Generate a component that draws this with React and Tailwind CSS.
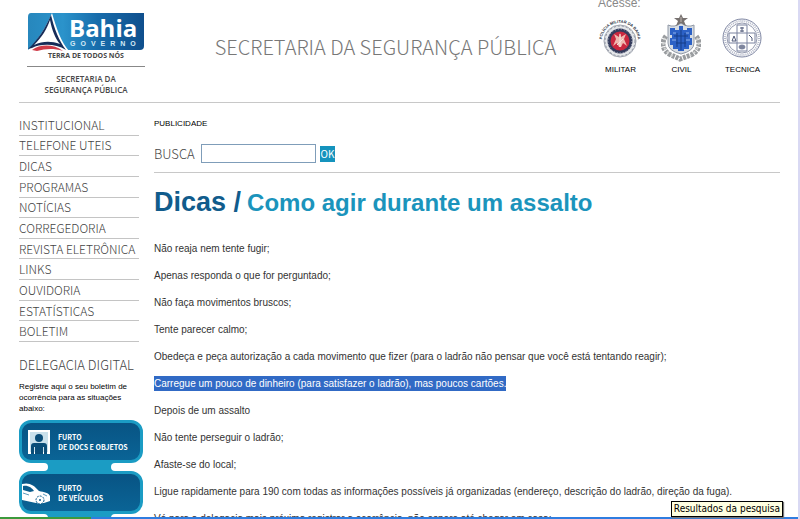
import React from 'react';

const menuItems = [
  'INSTITUCIONAL',
  'TELEFONE UTEIS',
  'DICAS',
  'PROGRAMAS',
  'NOTÍCIAS',
  'CORREGEDORIA',
  'REVISTA ELETRÔNICA',
  'LINKS',
  'OUVIDORIA',
  'ESTATÍSTICAS',
  'BOLETIM',
];

const tips = [
  { text: 'Não reaja nem tente fugir;' },
  { text: 'Apenas responda o que for perguntado;' },
  { text: 'Não faça movimentos bruscos;' },
  { text: 'Tente parecer calmo;' },
  { text: 'Obedeça e peça autorização a cada movimento que fizer (para o ladrão não pensar que você está tentando reagir);' },
  { text: 'Carregue um pouco de dinheiro (para satisfazer o ladrão), mas poucos cartões.', selected: true },
  { text: 'Depois de um assalto' },
  { text: 'Não tente perseguir o ladrão;' },
  { text: 'Afaste-se do local;' },
  { text: 'Ligue rapidamente para 190 com todas as informações possíveis já organizadas (endereço, descrição do ladrão, direção da fuga).' },
  { text: 'Vá para a delegacia mais próxima registrar a ocorrência, não espere até chegar em casa;' },
];

function BahiaLogo() {
  return (
    <svg width="118" height="38" viewBox="0 0 118 38" role="img" aria-label="Bahia Governo">
      <defs>
        <linearGradient id="logoBg" x1="0" y1="0" x2="1" y2="0">
          <stop offset="0" stopColor="#2787bd" />
          <stop offset="0.3" stopColor="#2b93cb" />
          <stop offset="0.6" stopColor="#176cab" />
          <stop offset="1" stopColor="#0f4f8d" />
        </linearGradient>
      </defs>
      <path d="M4 0H117V33Q117 37 113 37H1V4Q1 0 4 0Z" fill="url(#logoBg)" />
      <path d="M25 0C20 12 11 28 0 38H42C34 29 29 14 25 0Z" fill="#fff" />
      <path d="M24 2C19 14 11 27 1 36L5 35C13 31 28 30 39 37C32 28 27 15 24 2ZM23 7C25 17 28 25 33 31C24 28 16 28 7 32C15 24 20 16 23 7Z" fill="#172c58" fillRule="evenodd" />
      <path d="M5 37C13 31 27 31 36 38C26 35 18 36 10 38Z" fill="#cf3b48" />
      <text x="42" y="24" fill="#fff" fontSize="24" fontWeight="700" fontFamily="Open Sans, sans-serif">Bahia</text>
      <text x="43" y="33" fill="#d5e9f5" fontSize="7" fontWeight="700" letterSpacing="5" fontFamily="Liberation Sans, sans-serif">GOVERNO</text>
    </svg>
  );
}

function MilitarBadge() {
  return (
    <svg width="46" height="44" viewBox="0 0 46 44" className="overflow-visible" aria-hidden="true">
      <defs>
        <path id="militarArc" d="M7 33A18 18 0 1 1 39 33" />
      </defs>
      <text fill="#2c3344" fontSize="4" fontWeight="700" fontFamily="Liberation Sans, sans-serif">
        <textPath href="#militarArc" startOffset="50%" textAnchor="middle">POLÍCIA MILITAR DA BAHIA</textPath>
      </text>
      <circle cx="23" cy="25" r="16" fill="#e4e6e9" stroke="#a3a8b2" />
      <circle cx="23" cy="25" r="15" fill="none" stroke="#8b919e" strokeDasharray="2 2" />
      <circle cx="23" cy="25" r="11" fill="#c9283f" stroke="#343c5c" strokeWidth="3" />
      <circle cx="23" cy="25" r="12" fill="none" stroke="#b9bccb" strokeDasharray="1 2" />
      <path d="M23 17l1 4 5-3-2 5 3 7-4-3-2 4h-2l-2-4-4 3 3-7-2-5 5 3Z" fill="#efb9b0" />
      <path d="M23 18v13M20 29l6-6" stroke="#f7e4df" strokeWidth="1" />
    </svg>
  );
}

function CivilBadge() {
  return (
    <svg width="40" height="48" viewBox="0 0 40 48" aria-hidden="true">
      <path d="M5 22C0 28 1 37 10 41L19 45L30 41C39 37 40 28 35 22" fill="none" stroke="#999c9f" strokeWidth="5" strokeDasharray="3 1" />
      <path d="M4 24C0 31 4 39 14 43M36 24C40 31 36 39 26 43" fill="none" stroke="#d0d2d2" strokeWidth="2" strokeDasharray="2 3" />
      <path d="M7 11Q13 14 20 9Q27 14 33 11V29Q33 37 20 40Q7 37 7 29Z" fill="#d6dce3" stroke="#9199a6" />
      <path d="M9 14h5v2h4v-4h4v4h4v-2h5v7h-2v3h2v7h-3v4h-5v2h-6v-2h-5v-4h-3v-7h2v-3h-2Z" fill="#2c61c6" />
      <path d="M20 16v20M13 22h14M15 29h10M16 19v14M24 19v14" stroke="#173e87" strokeWidth="1" />
      <path d="M12 19h3M25 19h3M11 26h4M25 26h4" stroke="#8fb3eb" />
      <path d="M20 0l2 4h5l-4 3 2 5-5-3-5 3 2-5-4-3h5Z" fill="#77716f" />
      <path d="M20 3v5" stroke="#c0b9b4" />
    </svg>
  );
}

function TecnicaBadge() {
  return (
    <svg width="42" height="42" viewBox="0 0 42 42" aria-hidden="true" fill="none" stroke="#7b83a0">
      <circle cx="21" cy="21" r="19" />
      <circle cx="21" cy="21" r="17" stroke="#b4b9c9" strokeWidth="2" strokeDasharray="1 1" />
      <circle cx="21" cy="21" r="15" stroke="#959bb0" />
      <path d="M16 8h10v8h8v10h-8v8H16v-8H8V16h8Z" fill="#fff" />
      <path d="M16 16h10v10H16Z" />
      <path d="M21 10v5M19 11h4M19 14h4M11 24l2-5 2 5ZM28 18l3 3v3" stroke="#4f5878" />
      <ellipse cx="21" cy="30" rx="3" ry="2" fill="#7d849b" />
    </svg>
  );
}

function PersonIcon() {
  return (
    <svg width="22" height="24" viewBox="0 0 22 24" aria-hidden="true">
      <path d="M0 0h22v24H0Z" fill="#fff" />
      <path d="M2 2h18v20H2Z" fill="#c9e0eb" />
      <circle cx="11" cy="8" r="4" fill="#0a4d78" />
      <path d="M3 24V16Q3 13 6 13H16Q19 13 19 16V24H16V17H15V24H7V17H6V24Z" fill="#0a4d78" />
    </svg>
  );
}

function CarIcon() {
  return (
    <svg width="28" height="24" viewBox="0 0 28 24" aria-hidden="true">
      <path d="M0 3C7 1 12 4 17 10C22 11 27 12 28 15V20L22 22H14L0 19Z" fill="#fff" />
      <path d="M1 5C6 4 10 7 12 10L8 11L1 9Z" fill="#0b5c8c" />
      <path d="M21 13l4 2M1 12l6 2" stroke="#5d9bbd" />
      <circle cx="18" cy="19" r="4" fill="#fff" stroke="#0b5c8c" strokeDasharray="2 1" />
      <circle cx="18" cy="19" r="1" fill="#0b5c8c" />
    </svg>
  );
}

const agencies = [
  { name: 'MILITAR', icon: <MilitarBadge /> },
  { name: 'CIVIL', icon: <CivilBadge /> },
  { name: 'TECNICA', icon: <TecnicaBadge /> },
];

function ReportButton({ icon, title, subtitle }) {
  return (
    <a
      href="#"
      className="flex h-[43px] items-center gap-2 rounded-xl border-3 border-[#1b9cc4] bg-linear-to-b from-[#085484] to-[#0a6496] font-['Noto_Sans_CJK_JP',sans-serif] text-[7px] leading-[10px] font-bold text-white"
    >
      <span className="flex w-7 shrink-0 justify-end">{icon}</span>
      <span className="whitespace-nowrap">
        {title}
        <br />
        {subtitle}
      </span>
    </a>
  );
}

function Connector() {
  return (
    <div className="flex h-2 justify-between bg-[#1b9cc4]">
      <div className="w-[29px] rounded-r-full bg-white" />
      <div className="w-[32px] rounded-l-full bg-white" />
    </div>
  );
}

export default function App() {
  return (
    <div className="relative h-screen overflow-hidden border-r-2 border-[#d9d9f3] bg-white pr-[18px] pl-[19px] font-['Liberation_Sans',sans-serif] text-[#333]">
      {/* Header */}
      <header className="flex h-[103px] justify-between border-b border-[#c8c8c8]">
        <div className="ml-2 flex w-[118px] flex-col items-center pt-[13px] font-['Open_Sans',sans-serif] font-semibold text-[#484848]">
          <BahiaLogo />
          <p className="text-[7px] leading-[10px] font-bold whitespace-nowrap">TERRA DE TODOS NÓS</p>
          <div className="mt-[5px] w-full border-t border-[#888]" />
          <p className="mt-[6px] text-center text-[8px] leading-[11px] whitespace-nowrap">
            SECRETARIA DA
            <br />
            SEGURANÇA PÚBLICA
          </p>
        </div>
        <h1 className="pt-[31px] pl-9 font-['Noto_Sans_CJK_JP',sans-serif] text-[20px] leading-8 font-light whitespace-nowrap text-[#777]">
          SECRETARIA DA SEGURANÇA PÚBLICA
        </h1>
        <div className="mr-[7px] w-[183px]">
          <p className="-mt-1 pl-2 text-[12px] leading-[14px] text-[#888]">Acesse:</p>
          <div className="grid grid-cols-3">
            {agencies.map((agency) => (
              <a key={agency.name} href="#" className="flex flex-col items-center text-[8px] leading-[10px] text-black">
                <span className="flex h-[55px] items-center">{agency.icon}</span>
                {agency.name}
              </a>
            ))}
          </div>
        </div>
      </header>

      <div className="flex gap-[15px]">
        {/* Sidebar */}
        <aside className="w-[120px] shrink-0 pt-3">
          <nav>
            <ul className="grid h-[227px] auto-rows-fr grid-cols-1">
              {menuItems.map((item) => (
                <li key={item} className="flex items-center border-b border-[#c4c4c4]">
                  <a href="#" className="font-['Noto_Sans_CJK_JP',sans-serif] text-[12px] leading-4 font-light whitespace-nowrap text-[#444]">
                    {item}
                  </a>
                </li>
              ))}
            </ul>
          </nav>
          <h2 className="mt-[14px] font-['Noto_Sans_CJK_JP',sans-serif] text-[13px] leading-[18px] font-light whitespace-nowrap text-[#444]">
            DELEGACIA DIGITAL
          </h2>
          <p className="mt-[7px] text-[8px] leading-[11px] text-black">
            Registre aqui o seu boletim de ocorrência para as situações abaixo:
          </p>
          <div className="-mr-1 mt-[6px]">
            <ReportButton icon={<PersonIcon />} title="FURTO" subtitle="DE DOCS E OBJETOS" />
            <Connector />
            <ReportButton icon={<CarIcon />} title="FURTO" subtitle="DE VEÍCULOS" />
            <Connector />
          </div>
        </aside>

        {/* Content */}
        <main className="min-w-0 flex-1 pt-4">
          <p className="text-[8px] leading-[10px] text-black">PUBLICIDADE</p>
          <form className="mt-[10px] flex h-[34px] items-center border-b border-[#c8c8c8] pb-1" onSubmit={(e) => e.preventDefault()}>
            <label htmlFor="busca" className="w-[47px] font-['Noto_Sans_CJK_JP',sans-serif] text-[13px] leading-4 font-light text-[#444]">
              BUSCA
            </label>
            <input id="busca" type="text" className="h-[19px] w-[115px] border border-[#7f9db9] bg-white px-1 text-[10px]" />
            <button type="submit" className="ml-1 h-4 w-[15px] bg-[#1593bd] font-['Noto_Sans_CJK_JP',sans-serif] text-[10px] leading-4 text-white">
              OK
            </button>
          </form>
          <h2 className="mt-[13px] flex items-baseline gap-[6px] text-[24px] leading-[32px] font-bold whitespace-nowrap text-[#1b94bc]">
            <span className="text-[27px] text-[#115c8c]">Dicas /</span>
            Como agir durante um assalto
          </h2>
          <div className="mt-[22px] flex flex-col gap-3 text-[10px] leading-[15px] whitespace-nowrap">
            {tips.map((tip) => (
              <p key={tip.text}>
                {tip.selected ? <mark className="inline-block bg-[#316ac5] text-white">{tip.text}</mark> : tip.text}
              </p>
            ))}
          </div>
        </main>
      </div>

      {/* Taskbar edge and tooltip */}
      <div className="absolute inset-x-0 bottom-0 flex h-[2px]">
        <div className="w-[91px] bg-[#3c9a3c]" />
        <div className="flex-1 bg-[#2f7de0]" />
      </div>
      <div
        role="tooltip"
        className="absolute right-[15px] bottom-[2px] border border-black bg-[#ffffe1] px-[2px] font-['DejaVu_Sans_Condensed','DejaVu_Sans',sans-serif] text-[10px] leading-[14px] text-black shadow-[1px_1px_1px_#777]"
      >
        Resultados da pesquisa
      </div>
    </div>
  );
}
